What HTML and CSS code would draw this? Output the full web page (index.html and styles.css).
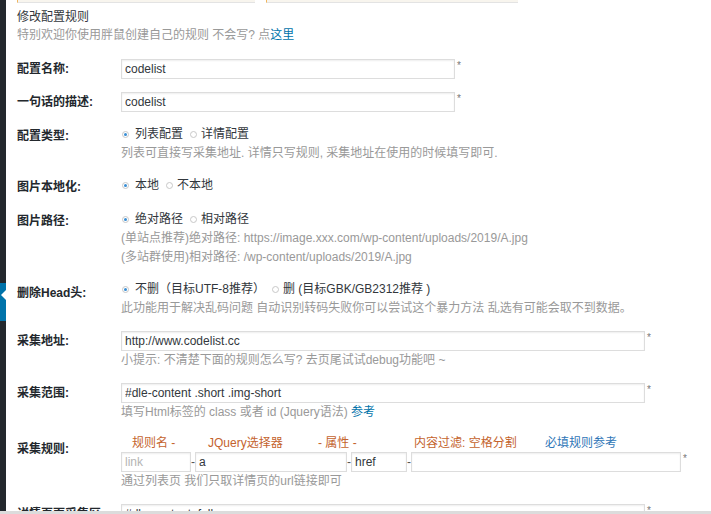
FILE: index.html
```html
<!DOCTYPE html>
<html lang="zh-CN">
<head>
  <meta charset="UTF-8">
  <title>修改配置规则</title>
  <link rel="stylesheet" href="styles.css">
</head>
<body>

  <div class="layout">
    <aside class="admin-menu">
      <span class="menu-current"></span>
    </aside>

    <main class="content">
      <div class="prev-fields">
        <span class="prev-box short"></span>
        <span class="prev-box long"></span>
      </div>

      <h3 class="title">修改配置规则</h3>
      <p class="intro">特别欢迎你使用胖鼠创建自己的规则 不会写? 点<a href="#">这里</a></p>

      <div class="form">
        <div class="row">
          <label class="th">配置名称:</label>
          <div class="td"><input class="text" type="text" value="codelist"><span class="req">*</span></div>
        </div>

        <div class="row">
          <label class="th">一句话的描述:</label>
          <div class="td"><input class="text" type="text" value="codelist"><span class="req">*</span></div>
        </div>

        <div class="row opt">
          <label class="th">配置类型:</label>
          <div class="td">
            <div class="radios">
              <label><input type="radio" name="type" checked>列表配置</label>
              <label><input type="radio" name="type">详情配置</label>
            </div>
            <p class="hint">列表可直接写采集地址. 详情只写规则, 采集地址在使用的时候填写即可.</p>
          </div>
        </div>

        <div class="row opt">
          <label class="th">图片本地化:</label>
          <div class="td">
            <div class="radios">
              <label><input type="radio" name="local" checked>本地</label>
              <label><input type="radio" name="local">不本地</label>
            </div>
          </div>
        </div>

        <div class="row opt">
          <label class="th">图片路径:</label>
          <div class="td">
            <div class="radios">
              <label><input type="radio" name="path" checked>绝对路径</label>
              <label><input type="radio" name="path">相对路径</label>
            </div>
            <p class="hint">(单站点推荐)绝对路径: https://image.xxx.com/wp-content/uploads/2019/A.jpg</p>
            <p class="hint">(多站群使用)相对路径: /wp-content/uploads/2019/A.jpg</p>
          </div>
        </div>

        <div class="row opt head">
          <label class="th">删除Head头:</label>
          <div class="td">
            <div class="radios">
              <label><input type="radio" name="head" checked>不删（目标UTF-8推荐）</label>
              <label><input type="radio" name="head">删 (目标GBK/GB2312推荐 )</label>
            </div>
            <p class="hint">此功能用于解决乱码问题 自动识别转码失败你可以尝试这个暴力方法 乱选有可能会取不到数据。</p>
          </div>
        </div>

        <div class="row">
          <label class="th">采集地址:</label>
          <div class="td">
            <input class="text wide" type="text" value="http://www.codelist.cc"><span class="req">*</span>
            <p class="hint">小提示: 不清楚下面的规则怎么写? 去页尾试试debug功能吧 ~</p>
          </div>
        </div>

        <div class="row">
          <label class="th">采集范围:</label>
          <div class="td">
            <input class="text wide" type="text" value="#dle-content .short .img-short"><span class="req">*</span>
            <p class="hint">填写Html标签的 class 或者 id (Jquery语法) <a href="#">参考</a></p>
          </div>
        </div>

        <div class="row rule">
          <label class="th">采集规则:</label>
          <div class="td">
            <div class="rule-head">
              <span class="col-name">规则名 -</span>
              <span class="col-sel">JQuery选择器</span>
              <span class="col-attr">- 属性 -</span>
              <span class="col-filter">内容过滤: 空格分割</span>
              <a class="col-ref" href="#">必填规则参考</a>
            </div>
            <div class="rule-inputs">
              <input class="text r-name" type="text" placeholder="link"><span class="dash">-</span><input class="text r-sel" type="text" value="a"><span class="dash">-</span><input class="text r-attr" type="text" value="href"><span class="dash">-</span><input class="text r-filter" type="text"><span class="req">*</span>
            </div>
            <p class="hint">通过列表页 我们只取详情页的url链接即可</p>
          </div>
        </div>

        <div class="row">
          <label class="th">详情页面采集区</label>
          <div class="td"><input class="text wide" type="text" value="#dle-content .full"><span class="req">*</span></div>
        </div>
      </div>
    </main>
  </div>

  <div class="bottom-bar"></div>

</body>
</html>
```

FILE: styles.css
```css
* {
  margin: 0;
  padding: 0;
  box-sizing: border-box;
}

html, body {
  height: 100%;
  overflow: hidden;
}

body {
  background: #fff;
  color: #23282d;
  font-family: "Liberation Sans", "Noto Sans CJK SC", sans-serif;
  font-size: 12px;
}

.layout {
  display: flex;
  min-height: 100%;
}

/* dark wordpress menu edge */
.admin-menu {
  width: 6px;
  flex-shrink: 0;
  background: #23282d;
  position: relative;
}

.menu-current {
  position: absolute;
  left: 0;
  top: 283px;
  width: 6px;
  height: 38px;
  background: #0073aa;
}

.menu-current::after {
  content: "";
  position: absolute;
  right: 0;
  top: 7px;
  border-right: 5px solid #fff;
  border-top: 5px solid transparent;
  border-bottom: 5px solid transparent;
}

.content {
  flex: 1;
  padding-left: 11px;
}

.prev-fields {
  display: flex;
  gap: 11px;
  height: 3px;
}

.prev-box {
  height: 3px;
  background: #f8f5ee;
  border-bottom: 1px solid #e3e3e3;
  border-left: 1px solid #f2b65c;
}

.prev-box.short { width: 238px; }
.prev-box.long { width: 252px; }

.title {
  margin-top: 5px;
  font-size: 12px;
  font-weight: normal;
  line-height: 18px;
  color: #32373c;
}

.intro {
  line-height: 18px;
  color: #999;
}

a {
  color: #0073aa;
  text-decoration: none;
}

.form {
  display: flex;
  flex-direction: column;
  gap: 13px;
  margin-top: 15px;
}

.row {
  display: grid;
  grid-template-columns: 104px 1fr;
}

.th {
  font-weight: bold;
  line-height: 20px;
  color: #23282d;
}

.row.opt .th { padding-top: 1px; }
.row.head .th { padding-top: 3px; }
.row.rule .th { padding-top: 4px; }

.td {
  line-height: 19px;
}

.text {
  height: 20px;
  width: 334px;
  padding: 0 3px;
  border: 1px solid #ddd;
  box-shadow: inset 0 1px 2px rgba(0, 0, 0, 0.07);
  background: #fff;
  color: #32373c;
  font-family: inherit;
  font-size: 12px;
  vertical-align: top;
  outline: none;
}

.text.wide { width: 524px; }

.text::placeholder { color: #b4b4b4; }

.req {
  display: inline-block;
  margin-left: 2px;
  font-size: 10px;
  line-height: 14px;
  color: #777;
  vertical-align: top;
}

.hint {
  color: #999;
  line-height: 19px;
}

.radios {
  display: flex;
  align-items: center;
  gap: 6px;
  color: #32373c;
}

.radios label {
  display: flex;
  align-items: center;
}

.radios input {
  appearance: none;
  -webkit-appearance: none;
  width: 7px;
  height: 7px;
  margin: 0 6px 0 1px;
  border: 1px solid #c8c8c8;
  border-radius: 50%;
  background: #fff;
  position: relative;
}

.radios label + label input { margin-right: 4px; }

.radios input:checked::after {
  content: "";
  position: absolute;
  left: 1px;
  top: 1px;
  width: 3px;
  height: 3px;
  border-radius: 50%;
  background: #3a8ed4;
}

.rule-head {
  display: flex;
  line-height: 17px;
  color: #c4632d;
}

.col-name { margin-left: 11px; width: 76px; }
.col-sel { width: 110px; }
.col-attr { width: 96px; }
.col-filter { width: 131px; }
.rule-head .col-ref { color: #2f76b7; }

.rule-inputs {
  display: flex;
  align-items: flex-start;
}

.dash {
  width: 4px;
  line-height: 20px;
  text-align: center;
  color: #555;
}

.text.r-name { width: 70px; }
.text.r-sel { width: 152px; }
.text.r-attr { width: 56px; }
.text.r-filter { width: 270px; }

.bottom-bar {
  position: fixed;
  left: 0;
  right: 0;
  bottom: 0;
  height: 3px;
  background: #dcdcdc;
}
```
